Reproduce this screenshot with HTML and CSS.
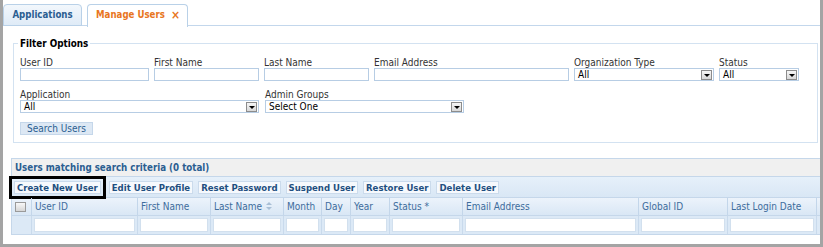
FILE: index.html
```html
<!DOCTYPE html>
<html lang="en">
<head>
    <meta charset="UTF-8">
    <title>Manage Users</title>
    <link rel="stylesheet" href="styles.css">
</head>
<body>
    <div class="frame">
        <div class="tabs">
            <div class="tab">Applications</div>
            <div class="tab tab-active"><span>Manage Users</span><span class="tab-close">&times;</span></div>
        </div>

        <fieldset class="filters">
            <legend>Filter Options</legend>
            <div class="field-row">
                <div class="field w-userid"><label>User ID</label><input type="text"></div>
                <div class="field w-name"><label>First Name</label><input type="text"></div>
                <div class="field w-name"><label>Last Name</label><input type="text"></div>
                <div class="field w-email"><label>Email Address</label><input type="text"></div>
                <div class="field w-org"><label>Organization Type</label><div class="select"><span>All</span><i class="select-btn"></i></div></div>
                <div class="field w-status"><label>Status</label><div class="select"><span>All</span><i class="select-btn"></i></div></div>
            </div>
            <div class="field-row row-2">
                <div class="field w-app"><label>Application</label><div class="select"><span>All</span><i class="select-btn"></i></div></div>
                <div class="field w-groups"><label>Admin Groups</label><div class="select"><span>Select One</span><i class="select-btn"></i></div></div>
            </div>
            <button class="search-btn" type="button">Search Users</button>
        </fieldset>

        <div class="grid-panel">
            <div class="grid-title">Users matching search criteria (0 total)</div>
            <div class="toolbar">
                <button class="tool-btn highlighted" type="button">Create New User</button>
                <button class="tool-btn" type="button">Edit User Profile</button>
                <button class="tool-btn" type="button">Reset Password</button>
                <button class="tool-btn" type="button">Suspend User</button>
                <button class="tool-btn" type="button">Restore User</button>
                <button class="tool-btn" type="button">Delete User</button>
            </div>
            <div class="grid-row grid-head">
                <div class="cell"><span class="checkbox"></span></div>
                <div class="cell">User ID</div>
                <div class="cell">First Name</div>
                <div class="cell">Last Name <span class="sort"></span></div>
                <div class="cell">Month</div>
                <div class="cell">Day</div>
                <div class="cell">Year</div>
                <div class="cell">Status *</div>
                <div class="cell">Email Address</div>
                <div class="cell">Global ID</div>
                <div class="cell">Last Login Date</div>
                <div class="cell cell-end"></div>
            </div>
            <div class="grid-row grid-filter">
                <div class="cell"></div>
                <div class="cell"><input type="text"></div>
                <div class="cell"><input type="text"></div>
                <div class="cell"><input type="text"></div>
                <div class="cell"><input type="text"></div>
                <div class="cell"><input type="text"></div>
                <div class="cell"><input type="text"></div>
                <div class="cell"><input type="text"></div>
                <div class="cell"><input type="text"></div>
                <div class="cell"><input type="text"></div>
                <div class="cell"><input type="text"></div>
                <div class="cell cell-end"></div>
            </div>
        </div>
    </div>
</body>
</html>
```

FILE: styles.css
```css
* {
    box-sizing: border-box;
}
body {
    margin: 0;
    font-family: "DejaVu Sans Condensed", "DejaVu Sans", sans-serif;
    font-size: 10px;
    color: #333;
    background: #fff;
}
.frame {
    height: 247px;
    border-left: 3px solid #a4a4a4;
    border-right: 3px solid #a4a4a4;
    border-bottom: 3px solid #a4a4a4;
    overflow: hidden;
    background: #fff;
}

/* tabs */
.tabs {
    display: flex;
    height: 26px;
    padding-top: 4px;
    border-bottom: 1px solid #c3d7ec;
}
.tab {
    width: 79px;
    height: 22px;
    line-height: 20px;
    text-align: center;
    font-weight: bold;
    font-size: 9.6px;
    color: #2b5e91;
    background: linear-gradient(#f2f7fc, #dfebf7);
    border: 1px solid #b9d1e8;
    border-radius: 4px 4px 0 0;
}
.tab-active {
    width: 101px;
    height: 23px;
    margin-left: 5px;
    padding: 0 7px 0 8px;
    color: #e8761e;
    background: #fff;
    border-bottom: none;
    display: flex;
    justify-content: space-between;
}
.tab-close {
    font-size: 12px;
}

/* filter box */
.filters {
    margin: 12px 2px 0 10px;
    padding: 8px 6px 7px 6px;
    border: 1px solid #d3e2f1;
}
.filters legend {
    padding: 0 2px;
    margin-left: -2px;
    font-weight: bold;
    font-size: 9.8px;
    color: #000;
    line-height: 11px;
}
.field-row {
    display: flex;
    gap: 5px;
}
.row-2 {
    margin-top: 8px;
    gap: 6px;
}
.field label {
    display: block;
    line-height: 11px;
    color: #333;
}
.field input,
.select {
    display: block;
    width: 100%;
    height: 13px;
    margin: 0;
    padding: 0 3px;
    border: 1px solid #b7cde4;
    background: #fff;
    font: inherit;
}
.select {
    display: flex;
    align-items: center;
    justify-content: space-between;
    padding-right: 1px;
    color: #000;
    line-height: 11px;
}
.select-btn {
    width: 11px;
    height: 10px;
    border: 1px solid #8c8c8c;
    background: linear-gradient(#f6f6f6, #d8d8d8);
    position: relative;
}
.select-btn::after {
    content: "";
    position: absolute;
    left: 2px;
    top: 3px;
    border-left: 3px solid transparent;
    border-right: 3px solid transparent;
    border-top: 3px solid #000;
}
.w-userid { width: 129px; }
.w-name { width: 105px; }
.w-email { width: 195px; }
.w-org { width: 140px; }
.w-status { width: 80px; }
.w-app { width: 239px; }
.w-groups { width: 199px; }

.search-btn {
    margin-top: 9px;
    width: 73px;
    height: 13px;
    padding: 0;
    font: inherit;
    color: #2b5e91;
    background: #dde8f4;
    border: 1px solid #c5d7ea;
    line-height: 11px;
}

/* results grid */
.grid-panel {
    margin: 15px 0 0 8px;
    border: 1px solid #c5d7ea;
    border-right: none;
}
.grid-title {
    height: 18px;
    line-height: 18px;
    padding-left: 3px;
    font-weight: bold;
    font-size: 9.7px;
    color: #2b5e91;
    background: #f0f0f0;
    border-bottom: 1px solid #c5d7ea;
}
.toolbar {
    display: flex;
    align-items: center;
    gap: 5px;
    height: 20px;
    padding-left: 2px;
    background: linear-gradient(#e6f0fa, #d9e7f5);
}
.tool-btn {
    height: 13px;
    padding: 0 2px;
    font: inherit;
    font-weight: bold;
    font-size: 9.5px;
    color: #1f4f80;
    line-height: 11px;
    background: #f6f9fd;
    border: 1px solid #cbdbec;
}
.highlighted {
    margin-right: 3px;
    outline: 3px solid #000;
    outline-offset: 2px;
}
.grid-row {
    display: grid;
    grid-template-columns: 20px 106px 73px 73px 38px 29px 39px 73px 176px 89px 89px 1fr;
}
.grid-head {
    height: 19px;
    background: linear-gradient(#ecf3fb, #d9e7f5);
    border-top: 1px solid #c5d7ea;
    border-bottom: 1px solid #c5d7ea;
    color: #3d6c9c;
}
.grid-head .cell {
    display: flex;
    align-items: center;
    padding-left: 3px;
    border-right: 1px solid #c3d6ea;
}
.grid-filter {
    height: 18px;
    background: #dce9f6;
}
.grid-filter .cell {
    padding: 2px 2px 1px 2px;
    border-right: 1px solid #c9daec;
}
.grid-filter input {
    display: block;
    width: 100%;
    height: 14px;
    margin: 0;
    border: 1px solid #d2e0ee;
    background: #fff;
}
.grid-row .cell-end {
    border-right: none;
}
.checkbox {
    display: block;
    width: 11px;
    height: 10px;
    border: 1px solid #9a9a9a;
    background: linear-gradient(#f8f8f8, #d6d6d6);
}
.sort {
    display: inline-block;
    width: 7px;
    height: 9px;
    margin-left: 4px;
    position: relative;
}
.sort::before,
.sort::after {
    content: "";
    position: absolute;
    left: 0;
    border-left: 3px solid transparent;
    border-right: 3px solid transparent;
}
.sort::before {
    top: 0;
    border-bottom: 3px solid #a9bfd6;
}
.sort::after {
    top: 5px;
    border-top: 3px solid #a9bfd6;
}
```
